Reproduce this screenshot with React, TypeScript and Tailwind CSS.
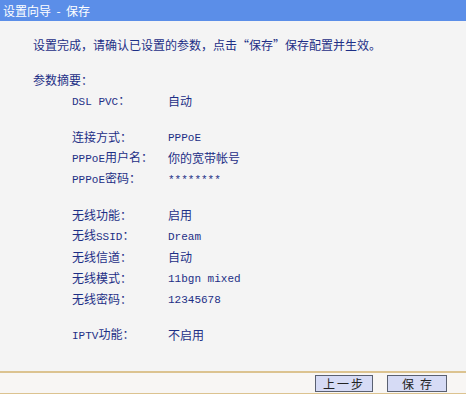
import React from "react";

// Latin text in the router UI is a narrow monospace bitmap face
const L = ({ children }: { children: React.ReactNode }) => (
  <span className="font-['Liberation_Mono',monospace] text-[11px]">{children}</span>
);

type Row = { label: React.ReactNode; value: React.ReactNode; gap?: boolean };

const rows: Row[] = [
  { label: <><L>DSL PVC</L>：</>, value: "自动" },
  { label: "连接方式：", value: <L>PPPoE</L>, gap: true },
  { label: <><L>PPPoE</L>用户名：</>, value: "你的宽带帐号" },
  { label: <><L>PPPoE</L>密码：</>, value: <L>********</L> },
  { label: "无线功能：", value: "启用", gap: true },
  { label: <>无线<L>SSID</L>：</>, value: <L>Dream</L> },
  { label: "无线信道：", value: "自动" },
  { label: "无线模式：", value: <L>11bgn mixed</L> },
  { label: "无线密码：", value: <L>12345678</L> },
  { label: <><L>IPTV</L>功能：</>, value: "不启用", gap: true },
];

export default function App() {
  return (
    <div className="w-[466px] h-[394px] bg-[#f4f4f4] flex flex-col overflow-hidden font-['Noto_Sans_CJK_SC',sans-serif] text-[12px] text-[#1d2f86]">
      <div className="h-[21px] bg-[#5b8ee8] text-white text-[12px] leading-[21px] pl-[3px] whitespace-pre">
        设置向导  -  保存
      </div>

      <div className="flex-1 pl-[33px] pt-[13px] leading-[21px]">
        <div>设置完成，请确认已设置的参数，点击“保存”保存配置并生效。</div>
        <div className="mt-[14px] h-[21px]">参数摘要：</div>
        <div className="pl-[39px]">
          {rows.map((r, i) => (
            <div
              key={i}
              className={r.gap ? "flex items-center h-[21px] mt-[15px]" : "flex items-center h-[21px]"}
            >
              <div className="w-[96px] flex items-baseline">{r.label}</div>
              <div>{r.value}</div>
            </div>
          ))}
        </div>
      </div>

      <div className="h-[23px] border-t-2 border-b border-[#dcc390] bg-[#f8f6f4] flex items-center justify-end gap-[14px] pr-[19px]">
        <button className="w-[58px] h-[17px] bg-[#d6dbf5] border border-[#5a6070] text-[12px] leading-[15px] text-[#222] tracking-[2px]">
          上一步
        </button>
        <button className="w-[60px] h-[17px] bg-[#d6dbf5] border border-[#5a6070] text-[12px] leading-[15px] text-[#222] tracking-[6px] pl-[6px]">
          保存
        </button>
      </div>
    </div>
  );
}
